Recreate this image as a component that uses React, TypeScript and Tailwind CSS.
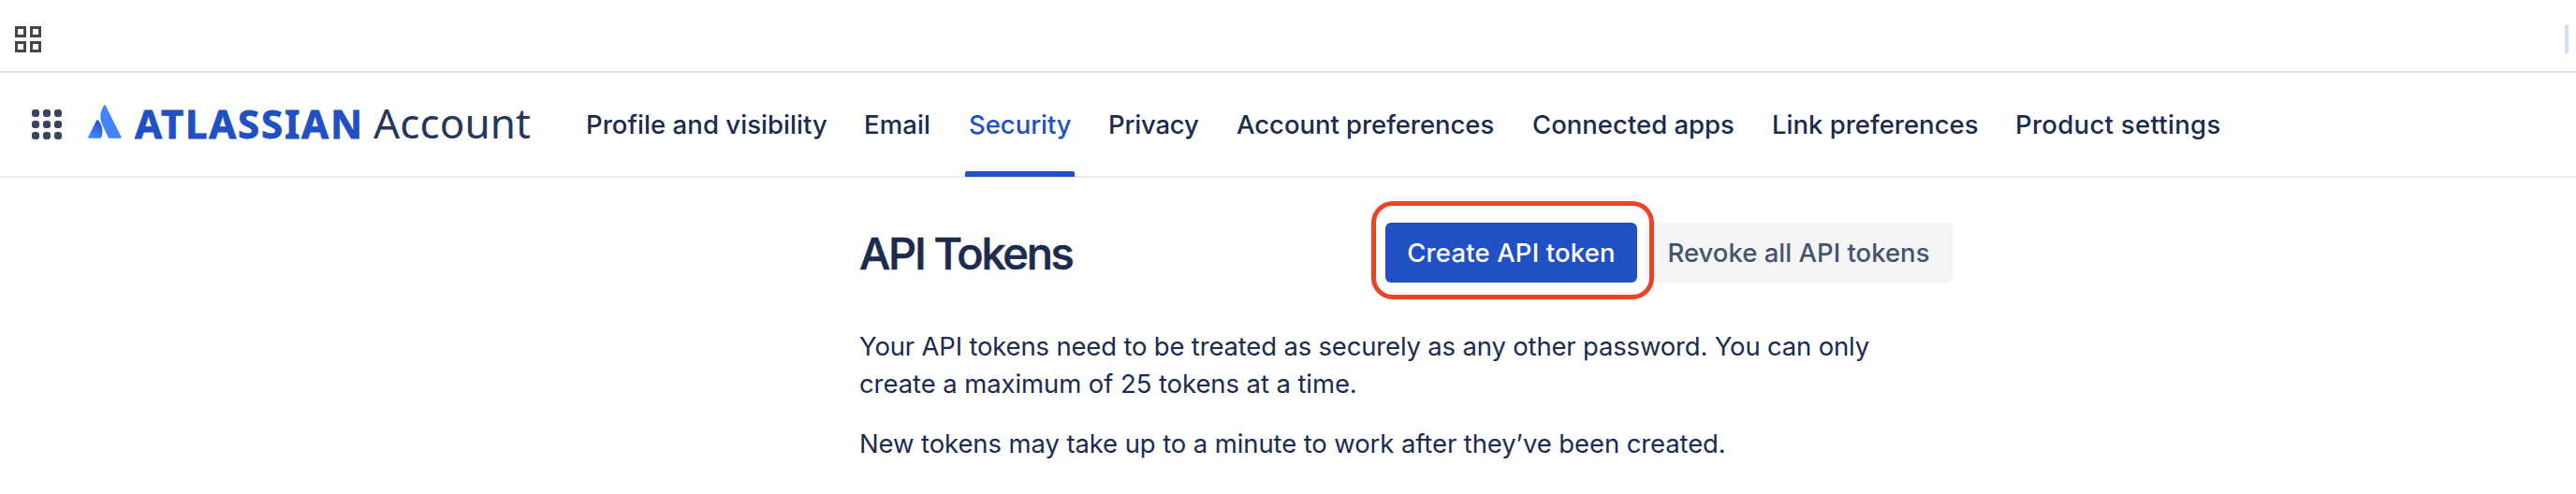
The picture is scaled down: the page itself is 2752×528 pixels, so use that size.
type NavItem = { label: string; box: string; active?: boolean };

const navItems: NavItem[] = [
  { label: "Profile and visibility", box: "w-[265px] tracking-[0.05px]" },
  { label: "Email", box: "w-[80px] tracking-[0.1px]" },
  { label: "Security", box: "w-[117px] tracking-[-0.05px]", active: true },
  { label: "Privacy", box: "w-[105px] tracking-[-0.2px]" },
  { label: "Account preferences", box: "w-[284px] tracking-[-0.05px]" },
  { label: "Connected apps", box: "w-[224px]" },
  { label: "Link preferences", box: "w-[228px]" },
  { label: "Product settings", box: "w-[224px] tracking-[0.3px]" },
];

function BrowserBar() {
  return (
    <div className="flex h-[78px] items-start justify-between border-b-2 border-[#e1e1e1] pl-4 pr-2">
      <div className="grid grid-cols-2 gap-1 pt-7">
        {[0, 1, 2, 3].map((i) => (
          <span key={i} className="size-3 border-3 border-[#474747]" />
        ))}
      </div>
      <div className="mt-[26px] h-8 w-1 rounded-full bg-[#d3e0fc]" />
    </div>
  );
}

function AtlassianMark() {
  return (
    <svg className="mt-[34px] h-9 w-9 shrink-0" viewBox="0 0 36 36">
      <defs>
        <linearGradient id="mark" x1="14" y1="18" x2="5" y2="34" gradientUnits="userSpaceOnUse">
          <stop offset="0" stopColor="#1d50c8" />
          <stop offset="1" stopColor="#4583fb" />
        </linearGradient>
      </defs>
      <path
        d="M9.2 16.6c.5-.8 1.2-.8 1.7 0 4.600 5.400 5.600 11.800 3.400 18.400-.2.500-.6.800-1.200.800H1c-.8 0-1.200-.6-.8-1.400z"
        fill="url(#mark)"
      />
      <path
        d="M17.200.6c.4-.7 1.200-.7 1.600.1l16.900 33.700c.4.800 0 1.400-.8 1.400H22.900c-.6 0-1-.3-1.200-.8L15.200 21.300C12 14.500 13 6.800 17.200.6z"
        fill="#4583fb"
      />
    </svg>
  );
}

function Header() {
  return (
    <header className="flex h-[112px] items-start border-b-2 border-[#ebecf2] pl-[34px]">
      <div className="mt-[39px] grid grid-cols-3 gap-1">
        {[0, 1, 2, 3, 4, 5, 6, 7, 8].map((i) => (
          <span key={i} className="size-2 rounded-[3px] bg-[#36435f]" />
        ))}
      </div>
      <div className="flex w-[556px] shrink-0 pl-7">
        <AtlassianMark />
        <div className="ml-3.5 mt-[23px] flex items-baseline font-['Noto_Sans',sans-serif] leading-[60px]">
          <span className="w-[255px] shrink-0 text-[42px] font-bold tracking-[1.8px] text-[#2150c5] [-webkit-text-stroke:0.8px_#2150c5]">
            ATLASSIAN
          </span>
          <span className="text-[44px] tracking-[0.1px] text-[#253858]">Account</span>
        </div>
      </div>
      <nav className="flex gap-8 text-[27.5px] font-medium text-[#1c2b4d]">
        {navItems.map((item) => (
          <a
            key={item.label}
            className={`${item.box} flex h-[111px] shrink-0 flex-col justify-between whitespace-nowrap ${item.active ? "text-[#2150c5]" : ""}`}
          >
            <span className="px-1 pt-[35px] leading-10">{item.label}</span>
            {item.active && <span className="h-1.5 rounded-t-[2px] bg-[#2150c5]" />}
          </a>
        ))}
      </nav>
    </header>
  );
}

export default function App() {
  return (
    <div className="h-[528px] w-[2752px] overflow-hidden bg-white font-['Inter',sans-serif] text-[#1c2b4d]">
      <BrowserBar />
      <Header />
      <main className="ml-[918px] w-[1168px] pt-12">
        <div className="flex h-16 justify-between">
          <h1 className="text-[47px] font-medium leading-[66px] tracking-[-2.3px] [-webkit-text-stroke:0.6px_#1c2b4d]">API Tokens</h1>
          <div className="flex gap-2 text-[27.5px] font-medium">
            <div className="relative">
              <button className="h-16 w-[269px] whitespace-nowrap rounded-md bg-[#2150c5] pt-0.5 tracking-[0.15px] text-white">
                Create API token
              </button>
              <div className="absolute -left-[15px] -top-[23px] z-10 h-[105px] w-[302px] rounded-[23px] border-[5.5px] border-[#ec4226]" />
            </div>
            <button className="h-16 w-[329px] whitespace-nowrap rounded-md bg-[#f5f5f6] pt-0.5 text-[#44546f]">
              Revoke all API tokens
            </button>
          </div>
        </div>
        <div className="pt-12 text-[27.5px] leading-10">
          <p className="whitespace-nowrap tracking-[-0.18px]">
            Your API tokens need to be treated as securely as any other password. You can only
            <br />
            <span className="tracking-[-0.09px]">create a maximum of 25 tokens at a time.</span>
          </p>
          <p className="mt-6 whitespace-nowrap tracking-[-0.11px]">
            New tokens may take up to a minute to work after they’ve been created.
          </p>
        </div>
      </main>
    </div>
  );
}
